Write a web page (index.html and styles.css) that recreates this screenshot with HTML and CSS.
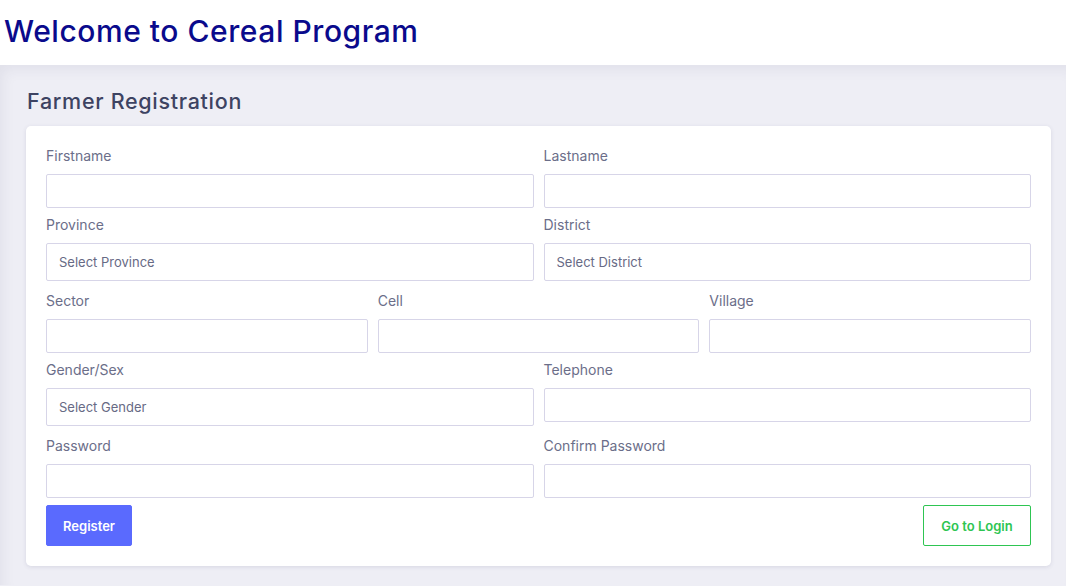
FILE: index.html
```html
<!DOCTYPE html>
<html lang="en">
<head>
<meta charset="utf-8">
<title>Cereal Program</title>
<link rel="stylesheet" href="styles.css">
</head>
<body>
<header class="topbar">
  <h1 class="title">Welcome to Cereal Program</h1>
</header>
<main class="main">
  <h2 class="page-title">Farmer Registration</h2>
  <form class="card">
    <div class="row two">
      <div class="group"><label class="label">Firstname</label><input class="input" type="text"></div>
      <div class="group"><label class="label">Lastname</label><input class="input" type="text"></div>
    </div>
    <div class="row two">
      <div class="group"><label class="label">Province</label><div class="select">Select Province</div></div>
      <div class="group"><label class="label">District</label><div class="select">Select District</div></div>
    </div>
    <div class="row three">
      <div class="group"><label class="label">Sector</label><input class="input" type="text"></div>
      <div class="group"><label class="label">Cell</label><input class="input" type="text"></div>
      <div class="group"><label class="label">Village</label><input class="input" type="text"></div>
    </div>
    <div class="row two">
      <div class="group"><label class="label">Gender/Sex</label><div class="select">Select Gender</div></div>
      <div class="group"><label class="label">Telephone</label><input class="input" type="text"></div>
    </div>
    <div class="row two">
      <div class="group"><label class="label">Password</label><input class="input" type="password"></div>
      <div class="group"><label class="label">Confirm Password</label><input class="input" type="password"></div>
    </div>
    <div class="actions">
      <button type="button" class="btn btn-primary">Register</button>
      <button type="button" class="btn btn-outline">Go to Login</button>
    </div>
  </form>
</main>
</body>
</html>
```

FILE: styles.css
```css
* { box-sizing: border-box; }
html, body { margin: 0; padding: 0; }
body {
  font-family: Inter, "Noto Sans", "Liberation Sans", sans-serif;
  background: #eeeef5;
  min-height: 586px;
}
.topbar {
  background: #ffffff;
  height: 65px;
  padding: 0 4px;
}
.title {
  margin: 0;
  padding-top: 12px;
  font-family: Inter, "Noto Sans", sans-serif;
  font-weight: 500;
  font-size: 30px;
  line-height: 38px;
  color: #0a0a8c;
  letter-spacing: 0.55px;
}
.main {
  background: #eeeef5;
  box-shadow: inset 6px 8px 14px -4px rgba(40, 40, 90, 0.07);
  padding: 23px 15px 19px 26px;
}
.page-title {
  margin: 0 0 11px 1px;
  font-family: Inter, "Noto Sans", sans-serif;
  font-weight: 500;
  font-size: 21.5px;
  line-height: 27px;
  color: #3d4362;
  letter-spacing: 0.7px;
}
.card {
  background: #ffffff;
  border-radius: 5px;
  box-shadow: 0 1px 4px rgba(50, 50, 100, 0.12);
  padding: 20px 20px 20px 20px;
}
.row {
  display: grid;
  column-gap: 10px;
  margin-bottom: 7px;
}
.row.two { grid-template-columns: 1fr 1fr; }
.row.three { grid-template-columns: 1fr 1fr 1fr; }
.group { display: flex; flex-direction: column; }
.label {
  font-size: 14px;
  line-height: 20px;
  margin-bottom: 8px;
  color: #6b6e89;
}
.input {
  display: block;
  width: 100%;
  height: 34px;
  border: 1px solid #d7d5e8;
  border-radius: 2px;
  background: #fff;
  font: inherit;
}
.select {
  height: 38px;
  margin-bottom: 3px;
  border: 1px solid #d7d5e8;
  border-radius: 2px;
  padding: 0 12px;
  display: flex;
  align-items: center;
  font-size: 13px;
  color: #676a85;
}
.actions {
  display: flex;
  justify-content: space-between;
  margin-top: 2px;
}
.btn {
  height: 41px;
  border-radius: 2px;
  font-family: Inter, "Noto Sans", sans-serif;
  font-weight: 600;
  font-size: 13px;
  cursor: pointer;
}
.btn-primary {
  width: 86px;
  background: #5a6afe;
  border: 1px solid #5a6afe;
  color: #ffffff;
}
.btn-outline {
  width: 108px;
  background: #ffffff;
  border: 1px solid #2ec552;
  color: #2ec552;
}
```
